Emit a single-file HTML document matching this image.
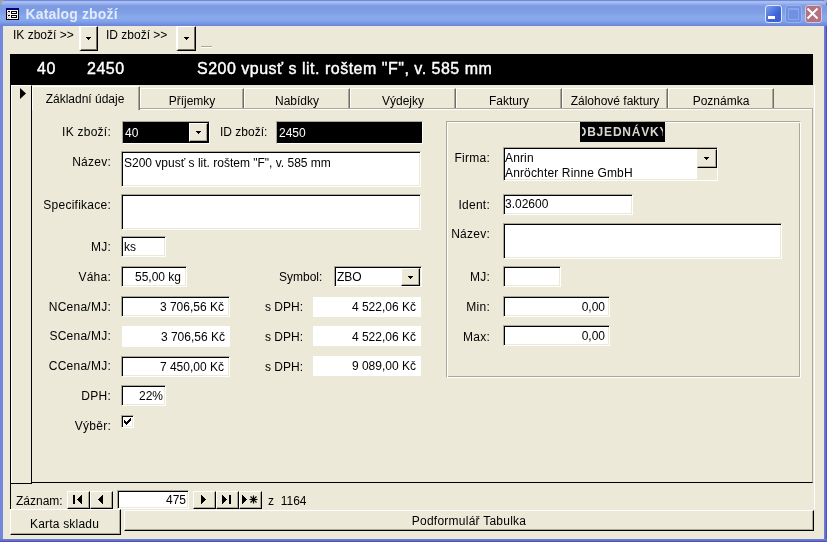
<!DOCTYPE html>
<html><head><meta charset="utf-8">
<style>
*{margin:0;padding:0;box-sizing:border-box}
html,body{width:827px;height:542px;overflow:hidden;-webkit-font-smoothing:antialiased;background:#ECE9D8;font-family:"Liberation Sans",sans-serif;font-size:12px;color:#000}
.a{position:absolute}
.t{position:absolute;white-space:nowrap;line-height:14px}
.r{position:absolute;white-space:nowrap;line-height:14px;text-align:right;letter-spacing:.25px}
.f{position:absolute;background:#fff;border:1px solid;border-color:#ACA899 #fff #fff #ACA899;box-shadow:inset 1px 1px 0 #000,inset -1px -1px 0 #ECE9D8}
.w{position:absolute;background:#fff}
.f .t,.w .t{left:2px}
.btn{position:absolute;background:#ECE9D8;border:1px solid;border-color:#fff #000 #000 #fff;box-shadow:inset -1px -1px 0 #ACA899}
.dd{position:absolute;width:5px;height:3px}
.dd:before{content:"";position:absolute;left:0;top:0;width:5px;height:1px;background:#000;box-shadow:1px 1px 0 -0px #000}
.tab{position:absolute;top:88px;height:21px;border-top:1px solid #fff;border-left:1px solid #fff;border-right:1px solid #716F64;box-shadow:inset -1px 0 0 #ACA899;text-align:center;line-height:24px}
</style></head><body><div style="position:absolute;left:0;top:0;width:827px;height:542px;will-change:transform">
<!-- window frame -->
<div class="a" style="left:0;top:0;width:827px;height:542px;background:#6E82DA"></div>
<div class="a" style="left:0;top:0;width:1px;height:542px;background:#7683DD"></div>
<div class="a" style="left:1px;top:0;width:1px;height:542px;background:#7289DB"></div>
<div class="a" style="left:2px;top:0;width:1px;height:542px;background:#6C87DB"></div>
<div class="a" style="left:824px;top:0;width:1px;height:542px;background:#6A7ADB"></div>
<div class="a" style="left:825px;top:0;width:1px;height:542px;background:#6C70C8"></div>
<div class="a" style="left:826px;top:0;width:1px;height:542px;background:#4A52BE"></div>
<div class="a" style="left:0;top:539px;width:827px;height:1px;background:#6A78D8"></div>
<div class="a" style="left:0;top:540px;width:827px;height:1px;background:#6C70C8"></div>
<div class="a" style="left:0;top:541px;width:827px;height:1px;background:#4A52BC"></div>
<div class="a" style="left:0;top:0;width:4px;height:4px;background:#A0A0A0"></div>
<div class="a" style="left:824px;top:0;width:3px;height:3px;background:#9CAAD8"></div>
<div class="a" style="left:0;top:0;width:827px;height:26px;border-radius:7px 7px 0 0;background:linear-gradient(#6E88E0 0px,#6E88E0 1px,#A9BFEF 1px,#A4BBEE 3px,#92ABE9 4px,#7E9BE3 6px,#7C9BE3 9px,#7F9FE6 13px,#88A9EC 16px,#86A8EB 20px,#7E9FE8 22px,#7290E2 24px,#6A82DC 26px)"></div>
<div class="a" style="left:3px;top:26px;width:821px;height:513px;background:#ECE9D8"></div>

<svg class="a" style="left:6px;top:8px" width="13" height="12">
 <rect x="0" y="0" width="13" height="12" fill="#000"/>
 <rect x="0" y="0" width="13" height="2" fill="#000080"/>
 <rect x="1" y="2" width="11" height="9" fill="#fff"/><rect x="1" y="4" width="1" height="1" fill="#C0C0C0"/><rect x="3" y="4" width="1" height="1" fill="#C0C0C0"/><rect x="2" y="5" width="1" height="1" fill="#C0C0C0"/><rect x="1" y="6" width="1" height="1" fill="#C0C0C0"/><rect x="3" y="6" width="1" height="1" fill="#C0C0C0"/><rect x="2" y="8" width="1" height="1" fill="#C0C0C0"/><rect x="1" y="9" width="1" height="1" fill="#C0C0C0"/><rect x="3" y="9" width="1" height="1" fill="#C0C0C0"/><rect x="2" y="10" width="1" height="1" fill="#C0C0C0"/>
 <rect x="2" y="3" width="2" height="1" fill="#000"/>
 <rect x="2" y="7" width="2" height="1" fill="#000"/>
 <rect x="5" y="3" width="6" height="3" fill="#000"/><rect x="6" y="4" width="4" height="1" fill="#fff"/>
 <rect x="5" y="7" width="6" height="3" fill="#000"/><rect x="6" y="8" width="4" height="1" fill="#fff"/>
</svg>
<div class="t" style="left:25.5px;top:6px;font-size:14px;font-weight:bold;color:#E2EAFB;line-height:16px;letter-spacing:.15px">Katalog zboží</div>
<div class="a" style="left:765px;top:5px;width:17px;height:18px;border-radius:3px;background:linear-gradient(135deg,#7CA0F0,#3C64D6 60%,#3A5FD0);border:1px solid #E0E8FA"><div class="a" style="left:2px;top:10px;width:7px;height:3px;background:#fff"></div></div>
<div class="a" style="left:785px;top:5px;width:17px;height:18px;border-radius:3px;background:#7090E2;border:1px solid #9AB0EC"><div class="a" style="left:2px;top:2px;width:11px;height:12px;border:1px solid #8CA4EA;border-top:2px solid #8CA4EA"></div></div>
<div class="a" style="left:805px;top:5px;width:17px;height:18px;border-radius:3px;background:#B27283;border:1px solid #DCC4D4">
 <svg class="a" style="left:0px;top:1px" width="13" height="13"><path d="M1.5 1.5L11.5 11.5M11.5 1.5L1.5 11.5" stroke="#fff" stroke-width="2"/></svg>
</div>

<!-- toolbar -->
<div class="t" style="left:13px;top:28px">IK zboží &gt;&gt;</div>
<div class="btn" style="left:79px;top:26px;width:19px;height:25px;border-left:2px solid #fff;box-shadow:inset -1px -1px 0 #716F64"><svg class="a" style="left:5px;top:10px" width="5" height="3"><path d="M0 0H5V1H4V2H3V3H2V2H1V1H0Z" fill="#000"/></svg></div>
<div class="t" style="left:106px;top:28px">ID zboží &gt;&gt;</div>
<div class="btn" style="left:176px;top:26px;width:20px;height:25px;border-left:2px solid #fff;box-shadow:inset -1px -1px 0 #716F64"><svg class="a" style="left:6px;top:10px" width="5" height="3"><path d="M0 0H5V1H4V2H3V3H2V2H1V1H0Z" fill="#000"/></svg></div>
<div class="a" style="left:201px;top:46px;width:11px;height:1px;background:#ACA899"></div><div class="a" style="left:201px;top:47px;width:11px;height:1px;background:#fff"></div>

<!-- form frame -->
<div class="a" style="left:10px;top:54px;width:1px;height:456px;background:#000"></div>
<div class="a" style="left:10px;top:54px;width:803px;height:31px;background:#000"></div>
<div class="t" style="left:37px;top:60px;font-size:16px;color:#fff;line-height:17px;letter-spacing:.5px;-webkit-text-stroke:.4px #fff">40</div>
<div class="t" style="left:87px;top:60px;font-size:16px;color:#fff;line-height:17px;letter-spacing:.5px;-webkit-text-stroke:.4px #fff">2450</div>
<div class="t" style="left:197px;top:60px;font-size:16px;color:#fff;line-height:17px;letter-spacing:.5px;-webkit-text-stroke:.4px #fff">S200 vpusť s lit. roštem "F", v. 585 mm</div>
<div class="a" style="left:814px;top:85px;width:1px;height:424px;background:#fff"></div>

<!-- record selector -->
<div class="a" style="left:11px;top:85px;width:21px;height:398px;border-top:1px solid #fff;border-left:1px solid #fff;border-right:1px solid #000"></div>
<svg class="a" style="left:20px;top:88px" width="7" height="11"><path d="M0 0L6 5.5L0 11Z" fill="#000"/></svg>
<div class="a" style="left:10px;top:483px;width:22px;height:1px;background:#000"></div>

<!-- tab control -->
<div class="a" style="left:32px;top:108px;width:781px;height:375px;border-top:1px solid #ACA899;border-right:1px solid #ACA899;border-bottom:1px solid #000"><div class="a" style="left:0;top:0;width:780px;height:1px;background:#fff"></div></div>
<div class="tab" style="left:140px;width:104px">Příjemky</div>
<div class="tab" style="left:244px;width:106px">Nabídky</div>
<div class="tab" style="left:350px;width:106px">Výdejky</div>
<div class="tab" style="left:456px;width:106px">Faktury</div>
<div class="tab" style="left:562px;width:106px">Zálohové faktury</div>
<div class="tab" style="left:668px;width:106px">Poznámka</div>
<div class="a" style="left:140px;top:108px;width:634px;height:1px;background:#ACA899"></div>
<div class="tab" style="left:32px;top:86px;height:24px;width:108px;border-right:1px solid #716F64;background:#ECE9D8;line-height:20px;padding-top:2px;padding-right:2px">Základní údaje</div>

<!-- left column -->
<div class="r" style="left:20px;width:91px;top:125px">IK zboží:</div>
<div class="f" style="left:122px;top:121px;width:88px;height:23px;background:#000;box-shadow:none"><div class="t" style="color:#fff;top:4px">40</div>
 <div class="btn" style="left:66px;top:1px;width:19px;height:19px"><svg class="a" style="left:6px;top:7px" width="5" height="3"><path d="M0 0H5V1H4V2H3V3H2V2H1V1H0Z" fill="#000"/></svg></div></div>
<div class="t" style="left:220px;top:125px">ID zboží:</div>
<div class="f" style="left:276px;top:121px;width:147px;height:23px;background:#000;box-shadow:none"><div class="t" style="color:#fff;top:4px">2450</div></div>

<div class="r" style="left:20px;width:91px;top:155px">Název:</div>
<div class="f" style="left:121px;top:151px;width:300px;height:36px"><div class="t" style="top:4px">S200 vpusť s lit. roštem "F", v. 585 mm</div></div>
<div class="r" style="left:20px;width:91px;top:198px">Specifikace:</div>
<div class="f" style="left:121px;top:194px;width:300px;height:36px"></div>
<div class="r" style="left:20px;width:91px;top:240px">MJ:</div>
<div class="f" style="left:121px;top:236px;width:45px;height:21px"><div class="t" style="top:3px">ks</div></div>
<div class="r" style="left:20px;width:91px;top:270px">Váha:</div>
<div class="f" style="left:121px;top:266px;width:66px;height:21px"><div class="t" style="top:3px;left:auto;right:5px">55,00 kg</div></div>
<div class="t" style="left:279px;top:270px">Symbol:</div>
<div class="f" style="left:334px;top:266px;width:88px;height:21px"><div class="t" style="top:3px">ZBO</div>
 <div class="btn" style="left:66px;top:1px;width:19px;height:18px"><svg class="a" style="left:6px;top:7px" width="5" height="3"><path d="M0 0H5V1H4V2H3V3H2V2H1V1H0Z" fill="#000"/></svg></div></div>

<div class="r" style="left:20px;width:91px;top:300px">NCena/MJ:</div>
<div class="f" style="left:121px;top:296px;width:109px;height:21px"><div class="t" style="top:3px;left:auto;right:5px">3 706,56 Kč</div></div>
<div class="t" style="left:265px;top:300px">s DPH:</div>
<div class="w" style="left:313px;top:297px;width:108px;height:20px"><div class="t" style="top:3px;left:auto;right:5px">4 522,06 Kč</div></div>

<div class="r" style="left:20px;width:91px;top:329px">SCena/MJ:</div>
<div class="w" style="left:122px;top:326px;width:108px;height:21px"><div class="t" style="top:4px;left:auto;right:5px">3 706,56 Kč</div></div>
<div class="t" style="left:265px;top:330px">s DPH:</div>
<div class="w" style="left:313px;top:326px;width:108px;height:20px"><div class="t" style="top:4px;left:auto;right:5px">4 522,06 Kč</div></div>

<div class="r" style="left:20px;width:91px;top:359px">CCena/MJ:</div>
<div class="f" style="left:121px;top:356px;width:109px;height:21px"><div class="t" style="top:3px;left:auto;right:5px">7 450,00 Kč</div></div>
<div class="t" style="left:265px;top:360px">s DPH:</div>
<div class="w" style="left:313px;top:356px;width:108px;height:20px"><div class="t" style="top:3px;left:auto;right:5px">9 089,00 Kč</div></div>

<div class="r" style="left:20px;width:91px;top:389px">DPH:</div>
<div class="f" style="left:121px;top:385px;width:45px;height:21px"><div class="t" style="top:3px;left:auto;right:2px">22%</div></div>
<div class="r" style="left:20px;width:91px;top:419px">Výběr:</div>
<div class="f" style="left:121px;top:415px;width:13px;height:13px"><svg class="a" style="left:2px;top:2px" width="7" height="7" shape-rendering="crispEdges" fill="#000"><rect x="6" y="0" width="1" height="1"/><rect x="5" y="1" width="1" height="1"/><rect x="6" y="1" width="1" height="1"/><rect x="0" y="2" width="1" height="1"/><rect x="4" y="2" width="1" height="1"/><rect x="5" y="2" width="1" height="1"/><rect x="6" y="2" width="1" height="1"/><rect x="0" y="3" width="1" height="1"/><rect x="1" y="3" width="1" height="1"/><rect x="3" y="3" width="1" height="1"/><rect x="4" y="3" width="1" height="1"/><rect x="5" y="3" width="1" height="1"/><rect x="0" y="4" width="1" height="1"/><rect x="1" y="4" width="1" height="1"/><rect x="2" y="4" width="1" height="1"/><rect x="3" y="4" width="1" height="1"/><rect x="4" y="4" width="1" height="1"/><rect x="1" y="5" width="1" height="1"/><rect x="2" y="5" width="1" height="1"/><rect x="3" y="5" width="1" height="1"/><rect x="2" y="6" width="1" height="1"/></svg></div>

<!-- right panel -->
<div class="a" style="left:446px;top:121px;width:355px;height:257px;border:1px solid;border-color:#ACA899 #fff #fff #ACA899;box-shadow:inset 1px 1px 0 #fff,inset -1px -1px 0 #ACA899"></div>
<div class="a" style="left:580px;top:122px;width:85px;height:20px;background:#000"><div class="a" style="left:2px;top:0;width:81px;height:20px;overflow:hidden"><div class="t" style="left:-5px;top:3px;width:91px;text-align:center;color:#D6D5D0;font-weight:bold;letter-spacing:.8px">OBJEDNÁVKY</div></div></div>
<div class="r" style="left:430px;width:60px;top:151px">Firma:</div>
<div class="f" style="left:503px;top:147px;width:215px;height:34px"><div class="t" style="top:3px;left:1px;line-height:14.9px;letter-spacing:.15px">Anrin<br>Anröchter Rinne GmbH</div>
 <div class="a" style="left:193px;top:1px;width:20px;height:31px;background:#ECE9D8"></div>
 <div class="btn" style="left:193px;top:1px;width:20px;height:19px;border-color:#ECE9D8 #000 #000 #ECE9D8"><svg class="a" style="left:6px;top:7px" width="5" height="3"><path d="M0 0H5V1H4V2H3V3H2V2H1V1H0Z" fill="#000"/></svg></div></div>
<div class="r" style="left:430px;width:60px;top:198px">Ident:</div>
<div class="f" style="left:503px;top:194px;width:130px;height:21px"><div class="t" style="top:2px;left:1px">3.02600</div></div>
<div class="r" style="left:430px;width:60px;top:227px">Název:</div>
<div class="f" style="left:503px;top:223px;width:279px;height:36px"></div>
<div class="r" style="left:430px;width:60px;top:270px">MJ:</div>
<div class="f" style="left:503px;top:266px;width:58px;height:21px"></div>
<div class="r" style="left:430px;width:60px;top:300px">Min:</div>
<div class="f" style="left:503px;top:296px;width:107px;height:21px"><div class="t" style="top:3px;left:auto;right:4px">0,00</div></div>
<div class="r" style="left:430px;width:60px;top:330px">Max:</div>
<div class="f" style="left:503px;top:325px;width:107px;height:21px"><div class="t" style="top:3px;left:auto;right:4px">0,00</div></div>

<!-- nav bar -->
<div class="t" style="left:16px;top:494px">Záznam:</div>
<div class="btn" style="left:67px;top:491px;width:23px;height:18px"></div>
<div class="btn" style="left:90px;top:491px;width:23px;height:18px"></div>
<div class="f" style="left:117px;top:490px;width:72px;height:19px"><div class="t" style="top:2px;left:auto;right:2px">475</div></div>
<div class="btn" style="left:193px;top:491px;width:23px;height:18px"></div>
<div class="btn" style="left:216px;top:491px;width:23px;height:18px"></div>
<div class="btn" style="left:239px;top:491px;width:23px;height:18px"></div>
<svg class="a" style="left:0;top:0" width="300" height="542" shape-rendering="crispEdges"><rect x="73" y="495" width="2" height="9" fill="#000"/><path d="M82 495V504L77 499.5Z" fill="#000"/><path d="M103 495V504L98 499.5Z" fill="#000"/><path d="M201 495V504L206 499.5Z" fill="#000"/><path d="M222 495V504L227 499.5Z" fill="#000"/><rect x="229" y="495" width="2" height="9" fill="#000"/><path d="M242 495V504L247 499.5Z" fill="#000"/><g shape-rendering="auto" stroke="#000" stroke-width="1.2"><path d="M253.5 495.5V503.5M249.5 499.5H257.5M250.5 496.5L256.5 502.5M256.5 496.5L250.5 502.5"/></g></svg>
<div class="t" style="left:268px;top:494px">z&nbsp; 1164</div>

<!-- bottom buttons -->
<div class="btn" style="left:10px;top:509px;width:111px;height:26px;text-align:center;line-height:28px;padding-right:2px;letter-spacing:.2px">Karta skladu</div>
<div class="btn" style="left:124px;top:510px;width:690px;height:21px;text-align:center;line-height:21px;letter-spacing:.25px">Podformulář Tabulka</div>
</div></body></html>
